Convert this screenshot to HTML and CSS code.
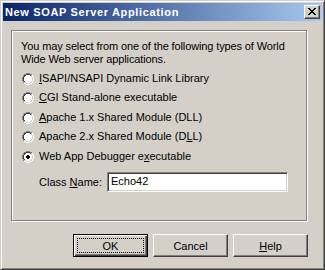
FILE: index.html
```html
<!DOCTYPE html>
<html lang="en">
<head>
    <meta charset="UTF-8">
    <title>New SOAP Server Application</title>
    <link rel="stylesheet" href="styles.css">
</head>
<body>
    <svg class="defs" width="0" height="0">
        <defs>
            <symbol id="radio" viewBox="0 0 12 12">
                <path fill="#808080" d="M4 0h4v1h-4z M2 1h2v1h-2z M8 1h2v1h-2z M1 2h1v2h-1z M0 4h1v4h-1z M1 8h1v2h-1z"/>
                <path fill="#ffffff" d="M10 2h1v2h-1z M11 4h1v4h-1z M10 8h1v2h-1z M2 10h2v1h-2z M8 10h2v1h-2z M4 11h4v1h-4z"/>
                <path fill="#404040" d="M4 1h4v1h-4z M2 2h2v1h-2z M8 2h1v1h-1z M2 3h1v1h-1z M1 4h1v4h-1z M2 8h1v1h-1z"/>
                <path fill="#d4d0c8" d="M9 2h1v1h-1z M9 3h1v1h-1z M10 4h1v4h-1z M9 8h1v1h-1z M2 9h2v1h-2z M8 9h2v1h-2z M4 10h4v1h-4z"/>
                <path fill="#ffffff" d="M4 2h4v1h-4z M3 3h6v1h-6z M2 4h8v4h-8z M3 8h6v1h-6z M4 9h4v1h-4z"/>
            </symbol>
        </defs>
    </svg>

    <div class="window">
        <div class="titlebar">
            <span class="title">New SOAP Server Application</span>
            <div class="close-btn">
                <svg width="8" height="7" viewBox="0 0 8 7" shape-rendering="crispEdges">
                    <path fill="#000" d="M0 0h2v1h-2z M6 0h2v1h-2z M1 1h2v1h-2z M5 1h2v1h-2z M2 2h4v1h-4z M3 3h2v1h-2z M2 4h4v1h-4z M1 5h2v1h-2z M5 5h2v1h-2z M0 6h2v1h-2z M6 6h2v1h-2z"/>
                </svg>
            </div>
        </div>

        <div class="content">
            <div class="group">
                <p class="intro">You may select from one of the following types of World<br>Wide Web server applications.</p>

                <ul class="options">
                    <li class="option">
                        <svg class="radio" shape-rendering="crispEdges"><use href="#radio"/></svg>
                        <span class="option-label"><u>I</u>SAPI/NSAPI Dynamic Link Library</span>
                    </li>
                    <li class="option">
                        <svg class="radio" shape-rendering="crispEdges"><use href="#radio"/></svg>
                        <span class="option-label"><u>C</u>GI Stand-alone executable</span>
                    </li>
                    <li class="option">
                        <svg class="radio" shape-rendering="crispEdges"><use href="#radio"/></svg>
                        <span class="option-label"><u>A</u>pache 1.x Shared Module (DLL)</span>
                    </li>
                    <li class="option">
                        <svg class="radio" shape-rendering="crispEdges"><use href="#radio"/></svg>
                        <span class="option-label">Apache 2.x Shared Module (D<u>L</u>L)</span>
                    </li>
                    <li class="option">
                        <svg class="radio" shape-rendering="crispEdges">
                            <use href="#radio"/>
                            <path fill="#000" d="M5 4h2v1h-2z M4 5h4v2h-4z M5 7h2v1h-2z"/>
                        </svg>
                        <span class="option-label">Web App Debugger e<u>x</u>ecutable</span>
                    </li>
                </ul>

                <div class="class-row">
                    <label class="class-label">Class <u>N</u>ame:</label>
                    <div class="text-field">Echo42</div>
                </div>
            </div>

            <div class="buttons">
                <button class="btn btn-default">OK</button>
                <button class="btn">Cancel</button>
                <button class="btn"><u>H</u>elp</button>
            </div>
        </div>
    </div>
</body>
</html>
```

FILE: styles.css
```css
* {
    box-sizing: border-box;
    margin: 0;
    padding: 0;
}

body {
    background-color: #d4d0c8;
    font-family: Tahoma, 'Liberation Sans', Arial, sans-serif;
    font-size: 11px;
    color: #000;
}

.defs {
    position: absolute;
}

.window {
    width: 325px;
    height: 270px;
    padding: 2px;
    border: 1px solid;
    border-color: #d4d0c8 #404040 #404040 #d4d0c8;
    box-shadow: inset 1px 1px #fff, inset -1px -1px #808080;
    background-color: #d4d0c8;
}

.titlebar {
    height: 18px;
    display: flex;
    align-items: center;
    justify-content: space-between;
    padding: 0 2px;
    background: linear-gradient(to right, #0a246a, #a6caf0);
}

.title {
    color: #fff;
    font-weight: bold;
    line-height: 13px;
    letter-spacing: 0.65px;
    white-space: nowrap;
}

.close-btn {
    width: 16px;
    height: 14px;
    padding: 2px 0 0 3px;
    border: 1px solid;
    border-color: #fff #404040 #404040 #fff;
    box-shadow: inset -1px -1px #808080;
    background-color: #d4d0c8;
    display: flex;
    align-items: flex-start;
}

.close-btn svg {
    display: block;
}

.content {
    padding: 9px 14px 0 8px;
}

.group {
    width: 296px;
    height: 191px;
    border: 1px solid #808080;
    box-shadow: inset 1px 1px #fff, 1px 1px #fff;
    padding: 9px 9px 0;
}

.intro {
    line-height: 13px;
    letter-spacing: -0.12px;
    white-space: nowrap;
}

.options {
    list-style: none;
    margin-top: 3px;
}

.option {
    display: flex;
    align-items: flex-start;
    height: 20px;
}

.option:nth-child(even) {
    height: 19px;
}

.radio {
    flex: none;
    width: 12px;
    height: 12px;
    margin: 4px 5px 0 1px;
}

.option:nth-child(even) .radio {
    margin-top: 3px;
}

.option-label {
    line-height: 13px;
    padding-top: 3px;
    white-space: nowrap;
}

.option:nth-child(even) .option-label {
    padding-top: 2px;
}

.class-row {
    display: flex;
    align-items: center;
    margin-top: 5px;
}

.class-label {
    width: 86px;
    padding-left: 18px;
    line-height: 13px;
}

.text-field {
    width: 181px;
    height: 20px;
    padding: 0 3px;
    line-height: 17px;
    background-color: #fff;
    border: 1px solid;
    border-color: #808080 #fff #fff #808080;
    box-shadow: inset 1px 1px #404040, inset -1px -1px #d4d0c8;
}

.buttons {
    display: flex;
    justify-content: flex-end;
    gap: 5px;
    margin-top: 13px;
}

.btn {
    width: 75px;
    height: 23px;
    font: inherit;
    color: #000;
    background-color: #d4d0c8;
    border: 1px solid;
    border-color: #fff #404040 #404040 #fff;
    box-shadow: inset -1px -1px #808080;
}

.btn-default {
    position: relative;
    border-color: #000;
    box-shadow: inset 1px 1px #fff, inset -1px -1px #404040, inset -2px -2px #808080;
}

.btn-default::after {
    content: '';
    position: absolute;
    top: 3px;
    left: 3px;
    right: 3px;
    bottom: 3px;
    border: 1px dotted #000;
}
```
